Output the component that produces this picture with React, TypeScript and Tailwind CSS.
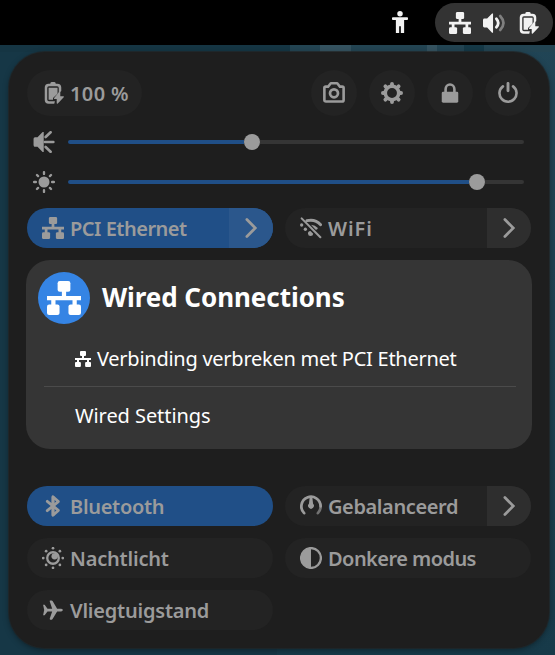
import React from "react";

type IconProps = { size?: number; className?: string };

function Icon({ size = 22, className = "", children }: IconProps & { children: React.ReactNode }) {
  return (
    <svg width={size} height={size} viewBox="0 0 16 16" fill="currentColor" className={`shrink-0 ${className}`}>
      {children}
    </svg>
  );
}

const Network = (p: IconProps) => (
  <Icon {...p}>
    <rect x="5" y="0" width="6" height="5.1" rx="1" />
    <rect x="0" y="11" width="5.9" height="5" rx="1" />
    <rect x="10.1" y="11" width="5.9" height="5" rx="1" />
    <path d="M7 4h2v3h7v2h-2v3h-2V9H4v3H2V9H0V7h7z" />
  </Icon>
);

const Person = (p: IconProps) => (
  <Icon {...p}>
    <circle cx="8" cy="2" r="2" />
    <path d="M2.6 4.6h10.8c.6 0 .6 1.9 0 1.9H11V16H8.6v-5H7.4v5H5V6.5H2.6c-.6 0-.6-1.9 0-1.9z" />
  </Icon>
);

const Volume = (p: IconProps) => (
  <Icon {...p}>
    <path d="M0 6c0-.7.4-1.2 1-1.2h2L6.6 1h.7v14h-.7L3 11.2H1c-.6 0-1-.5-1-1.2z" />
    <path d="M9.7 4.9q2.8 3.1 0 6.2" fill="none" stroke="currentColor" strokeWidth="2" strokeLinecap="round" />
    <path d="M12.5 2.9q4.8 5.1 0 10.2" fill="none" stroke="currentColor" strokeWidth="1.9" opacity=".4" strokeLinecap="round" />
  </Icon>
);

const SpeakerBurst = (p: IconProps) => (
  <Icon {...p}>
    <path d="M.4 6c0-.9.4-1.5 1.1-1.5h1.8L7 .8h.8v14.4H7l-3.7-3.7H1.5c-.7 0-1.1-.6-1.1-1.5z" />
    <path d="M8.6 8h6.2M9.2 4.4l3.6-3.5M9.2 11.6l3.6 3.5" fill="none" stroke="currentColor" strokeWidth="1.9" strokeLinecap="round" />
  </Icon>
);

const Battery = (p: IconProps) => (
  <Icon {...p}>
    <path d="M6 1.2Q6 0 7 0h2q1 0 1 1.2h1.2Q14 1.4 14 4v2.5l-1.8 1.8V4.3q0-1.2-1.2-1.2H5q-1.2 0-1.2 1.2v8.5q0 1.2 1.2 1.2h4.4l-.5 1.8H4.8Q2 15.6 2 13V4q0-2.6 2.8-2.8z" />
    <path d="M4.8 4.2h6.5v4.4L8 11.7v1.2H4.8z" />
    <path d="M13.3 7.3v3.1h2.2c.5 0 .6.4.3.7l-4.3 4.5c-.4.4-.8.2-.8-.3v-2.9H9.1c-.5 0-.6-.4-.3-.7l3.7-4.6c.3-.4.8-.3.8.2z" />
  </Icon>
);

const Camera = (p: IconProps) => (
  <Icon {...p}>
    <path d="M2 3.4h1.7l1.5-2Q5.5.9 6.2.9h3.6q.7 0 1 .5l1.5 2H14q1 0 1 1V13q0 1.2-1.2 1.2H2.2Q1 14.2 1 13V4.4q0-1 1-1z" fill="none" stroke="currentColor" strokeWidth="1.9" />
    <circle cx="8" cy="8.2" r="2.9" fill="none" stroke="currentColor" strokeWidth="2" />
  </Icon>
);

const Gear = (p: IconProps) => (
  <Icon {...p}>
    <circle cx="8" cy="8" r="4.9" fill="none" stroke="currentColor" strokeWidth="2.6" />
    <g stroke="currentColor" strokeWidth="2.8" strokeLinecap="round">
      <path d="M8 2.4v-1M8 13.6v1M2.4 8h-1M13.6 8h1M4.1 4.1l-.9-.9M11.9 4.1l.9-.9M4.1 11.9l-.9.9M11.9 11.9l.9.9" />
    </g>
  </Icon>
);

const Lock = (p: IconProps) => (
  <Icon {...p}>
    <path d="M4.8 8V5.2a3.2 3.4 0 0 1 6.4 0V8" fill="none" stroke="currentColor" strokeWidth="1.9" />
    <rect x="2" y="7" width="12" height="8" rx="1" />
  </Icon>
);

const Power = (p: IconProps) => (
  <Icon {...p}>
    <path d="M4.3 3.2a6.2 6.2 0 1 0 7.4 0" fill="none" stroke="currentColor" strokeWidth="1.9" strokeLinecap="round" />
    <path d="M8 1v5.4" stroke="currentColor" strokeWidth="2.1" strokeLinecap="round" />
  </Icon>
);

const Sun = (p: IconProps) => (
  <Icon {...p}>
    <circle cx="8" cy="8" r="4" />
    <path d="M8 .8v1.3M8 13.9v1.3M.8 8h1.3M13.9 8h1.3M2.9 2.9l.8.8M12.3 12.3l.8.8M2.9 13.1l.8-.8M12.3 3.7l.8-.8" stroke="currentColor" strokeWidth="1.7" strokeLinecap="round" />
  </Icon>
);

const NightLight = (p: IconProps) => (
  <Icon {...p}>
    <circle cx="8" cy="8" r="4.2" fill="none" stroke="currentColor" strokeWidth="1.7" />
    <circle cx="9.2" cy="6.8" r="2.3" />
    {[[8, 0.9], [8, 15.1], [0.9, 8], [15.1, 8], [3, 3], [13, 3], [3, 13], [13, 13]].map(([x, y]) => (
      <circle key={`${x}-${y}`} cx={x} cy={y} r="1" />
    ))}
  </Icon>
);

const WifiOff = (p: IconProps) => (
  <Icon {...p}>
    <path d="M5 2.7Q11 1.2 15 5.6" fill="none" stroke="currentColor" strokeWidth="2.1" strokeLinecap="round" />
    <path d="M8 5.6q3 .2 5 2.4-.4 1.6-1.8 1.1z" />
    <circle cx="1.2" cy="5.8" r="1.2" />
    <circle cx="3.9" cy="8.9" r="1.2" />
    <path d="M7.6 10.1a1.9 1.9 0 1 0 2 2z" />
    <path d="M1.2 1l13.6 13.7" stroke="currentColor" strokeWidth="1.5" strokeLinecap="round" />
  </Icon>
);

const Bluetooth = (p: IconProps) => (
  <Icon {...p}>
    <path d="M3.8 4.6l8.1 6.6L8 14.8V1.2l3.9 3.6-8.1 6.6" fill="none" stroke="currentColor" strokeWidth="2" strokeLinejoin="round" strokeLinecap="round" />
    <path d="M7 1h2v14H7z" />
  </Icon>
);

const Plane = (p: IconProps) => (
  <Icon {...p}>
    <path d="M.8 4.1h1.1L4 7h3.4L5.6 1.6Q5.5 1 6 1h1q.4 0 .7.5L11 7h3q1.2.3 1.2 1T14 9h-3l-3.3 5.5q-.3.5-.7.5H6q-.5 0-.4-.6L7.4 9H4l-2.1 2.9H.8L1.6 8z" />
  </Icon>
);

const Gauge = (p: IconProps) => (
  <Icon {...p}>
    <path d="M3 13.2A7 7 0 1 1 15 8.2" fill="none" stroke="currentColor" strokeWidth="2" strokeLinecap="round" />
    <path d="M15 8.2a7 7 0 0 1-2 5" fill="none" stroke="currentColor" strokeWidth="2" strokeLinecap="round" opacity=".65" />
    <path d="M7 2h2l.5 4.4A2.1 2.1 0 1 1 6.5 6.4z" />
  </Icon>
);

const Contrast = (p: IconProps) => (
  <Icon {...p}>
    <circle cx="8" cy="8" r="7.2" fill="none" stroke="currentColor" strokeWidth="1.7" />
    <path d="M8 .8v14.4A7.2 7.2 0 0 1 8 .8z" />
  </Icon>
);

const Chevron = () => (
  <Icon>
    <path d="M5 1.8L11.1 8 5 14.2" fill="none" stroke="currentColor" strokeWidth="2" strokeLinecap="round" />
  </Icon>
);

function Tile({ icon, label, tracking, active = false, arrow = false }: { icon: React.ReactNode; label: string; tracking: string; active?: boolean; arrow?: boolean }) {
  return (
    <div className={`flex h-10 w-[246px] overflow-hidden rounded-full ${active ? "bg-[#204f87]" : "bg-[#232323]"}`}>
      <div className="flex flex-1 items-center gap-[6px] pl-[15px]">
        {icon}
        <span className={`whitespace-nowrap pt-[2px] text-[20px] leading-6 font-semibold ${tracking}`}>{label}</span>
      </div>
      {arrow && (
        <div className={`flex w-11 items-center justify-center ${active ? "bg-[#2b578c]" : "bg-[#2e2e2e]"}`}>
          <Chevron />
        </div>
      )}
    </div>
  );
}

function Slider({ icon, value }: { icon: React.ReactNode; value: number }) {
  return (
    <div className="flex h-10 items-center gap-[13px] pl-[6px] pr-[7px]">
      {icon}
      <div className="flex h-4 flex-1 items-center">
        <div className="h-1 rounded-l-full bg-[#204f87]" style={{ width: value - 8 }} />
        <div className="size-4 rounded-full bg-[#9b9b9b]" />
        <div className="h-1 flex-1 rounded-r-full bg-[#353535]" />
      </div>
    </div>
  );
}

export default function App() {
  return (
    <div className="flex h-[655px] w-[555px] flex-col overflow-hidden bg-[linear-gradient(180deg,#214556,#1f4252_40%,#173a49)] font-['Noto_Sans',sans-serif]">
      <header className="flex h-[45px] shrink-0 justify-end bg-black pr-[2px] pt-[3px] text-[#f2f2f2]">
        <div className="mr-[24px] flex h-[38px] items-center">
          <Person />
        </div>
        <div className="flex h-[39px] w-[118px] items-center gap-[12px] rounded-full bg-[#333333] pl-[14px]">
          <Network />
          <Volume />
          <Battery />
        </div>
      </header>
      <div className="flex flex-1 flex-col bg-[linear-gradient(90deg,#163746_50%,transparent_50%)]">
        <div className="flex h-[7px] shrink-0">
          <div className="w-[290px] bg-[#153543]" />
          <div className="w-[30px] bg-[#234452]" />
          <div className="w-[31px] bg-[#34525f]" />
          <div className="w-[76px] bg-[#234452]" />
          <div className="w-[10px] bg-[#34525f]" />
          <div className="w-[27px] bg-[#234452]" />
          <div className="w-5 bg-[#153846]" />
          <div className="flex-1 bg-[#234452]" />
        </div>
        <main className="ml-[9px] flex h-[596px] w-[540px] shrink-0 flex-col rounded-[36px] bg-[#1e1e1e] px-[18px] pt-[18px] text-[#9b9b9b] shadow-[0_0_0_1px_rgba(36,36,36,0.7),0_2px_6px_rgba(0,0,0,0.4)]">
          <div className="flex h-[46px] items-center justify-between">
            <div className="flex h-[46px] w-[115px] items-center gap-[6px] rounded-full bg-[#232323] pl-[15px]">
              <Battery />
              <span className="whitespace-nowrap pt-[2px] text-[20px] leading-6 font-semibold tracking-[0.4px]">100 %</span>
            </div>
            <div className="flex gap-3">
              {[Camera, Gear, Lock, Power].map((Button, i) => (
                <div key={i} className="flex size-[46px] items-center justify-center rounded-full bg-[#232323]">
                  <Button />
                </div>
              ))}
            </div>
          </div>
          <div className="mt-[6px]">
            <Slider icon={<SpeakerBurst />} value={184} />
            <Slider icon={<Sun />} value={409} />
          </div>
          <div className="mt-[6px] flex gap-3">
            <Tile icon={<Network />} label="PCI Ethernet" tracking="tracking-[-0.5px]" active arrow />
            <Tile icon={<WifiOff />} label="WiFi" tracking="tracking-[0.9px]" arrow />
          </div>
          <section className="-mx-px mt-3 h-[189px] shrink-0 rounded-[24px] bg-[#353535] px-3 pt-3 text-white">
            <div className="flex h-[52px] items-center gap-3">
              <div className="flex size-[52px] items-center justify-center rounded-full bg-[#3584e4]">
                <Network size={34} />
              </div>
              <h2 className="whitespace-nowrap pb-[2px] text-[26px] leading-8 font-bold tracking-[-0.06px]">Wired Connections</h2>
            </div>
            <div className="ml-[6px] mr-1 mt-[7px] flex h-[56px] items-center gap-[6px] border-b border-[#4b4b4b] pl-[31px]">
              <Network size={16} />
              <span className="whitespace-nowrap pt-px text-[20px] leading-6 tracking-[-0.26px]">Verbinding verbreken met PCI Ethernet</span>
            </div>
            <div className="mx-[6px] flex h-[56px] items-center pl-[31px]">
              <span className="whitespace-nowrap pt-px text-[20px] leading-6 tracking-[-0.07px]">Wired Settings</span>
            </div>
          </section>
          <div className="mt-[37px] grid grid-cols-[246px_246px] gap-3">
            <Tile icon={<Bluetooth />} label="Bluetooth" tracking="tracking-[-0.3px]" active />
            <Tile icon={<Gauge />} label="Gebalanceerd" tracking="tracking-[-0.4px]" arrow />
            <Tile icon={<NightLight />} label="Nachtlicht" tracking="tracking-[-0.2px]" />
            <Tile icon={<Contrast />} label="Donkere modus" tracking="tracking-[-0.55px]" />
            <Tile icon={<Plane />} label="Vliegtuigstand" tracking="tracking-[-0.22px]" />
          </div>
        </main>
      </div>
    </div>
  );
}
